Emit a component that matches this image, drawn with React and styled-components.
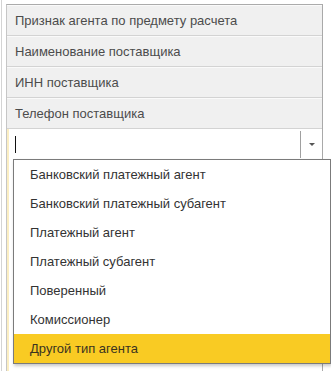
import React from "react";
import styled, { createGlobalStyle } from "styled-components";

const Global = createGlobalStyle`
  html, body { margin: 0; padding: 0; background: #ffffff; overflow: hidden; }
  body { font-family: Arial, "Liberation Sans", sans-serif; }
`;

const Page = styled.div`
  position: relative;
  width: 331px;
  height: 371px;
  box-sizing: border-box;
  padding: 0 0 0 1px;
`;

const Frame = styled.div`
  height: 100%;
  box-sizing: border-box;
  border-left: 1px solid #d4d4d4;
  padding: 4px 0 0 4px;
`;

const Table = styled.div`
  width: 317px;
  height: 100%;
  box-sizing: border-box;
  border-top: 1px solid #ababab;
  border-left: 1px solid #c6c6c6;
  border-right: 1px solid #a9a9a9;
  display: flex;
  flex-direction: column;
`;

const HeaderCell = styled.div`
  height: 30px;
  box-sizing: border-box;
  border-bottom: 1px solid #d3d3d3;
  border-top: 1px solid #fafafa;
  background: #f0f0f0;
  color: #4c4c4c;
  font-size: 13px;
  display: flex;
  align-items: center;
  padding-left: 8px;
  height: 31px;
`;

const InputRow = styled.div`
  height: 30px;
  box-sizing: border-box;
  background: #ffffff;
  display: flex;
  align-items: stretch;
  border-left: 2px solid #fbeec3;
`;

const InputField = styled.div`
  flex: 1;
  display: flex;
  align-items: center;
  padding-left: 6px;
`;

const Caret = styled.span`
  display: block;
  width: 1px;
  height: 17px;
  background: #111;
`;

const DropButton = styled.div`
  width: 21px;
  margin: 2px 0 1px;
  border-left: 1px solid #a0a0a0;
  display: flex;
  align-items: center;
  justify-content: center;
`;

const Arrow = styled.span`
  width: 0;
  height: 0;
  border-left: 3px solid transparent;
  border-right: 3px solid transparent;
  border-top: 3px solid #555;
  margin-left: 1px;
`;

const Rest = styled.div`
  flex: 1;
  border-left: 2px solid #fbeec3;
`;

const Dropdown = styled.div`
  position: absolute;
  left: 13px;
  top: 159px;
  width: 318px;
  box-sizing: border-box;
  border: 1px solid #7b7b7b;
  background: #ffffff;
  box-shadow: 1px 2px 3px rgba(0, 0, 0, 0.22);
  display: flex;
  flex-direction: column;
`;

const Item = styled.div`
  height: 29px;
  display: flex;
  align-items: center;
  padding-left: 16px;
  font-size: 13px;
  color: ${(p) => (p.$active ? "#3a3320" : "#333333")};
  background: ${(p) => (p.$active ? "#f9cb23" : "#ffffff")};
`;

const headers = [
  "Признак агента по предмету расчета",
  "Наименование поставщика",
  "ИНН поставщика",
  "Телефон поставщика",
];

const items = [
  "Банковский платежный агент",
  "Банковский платежный субагент",
  "Платежный агент",
  "Платежный субагент",
  "Поверенный",
  "Комиссионер",
  "Другой тип агента",
];

export default function App() {
  return (
    <>
      <Global />
      <Page>
        <Frame>
          <Table>
            {headers.map((h) => (
              <HeaderCell key={h}>{h}</HeaderCell>
            ))}
            <InputRow>
              <InputField>
                <Caret />
              </InputField>
              <DropButton>
                <Arrow />
              </DropButton>
            </InputRow>
            <Rest />
          </Table>
        </Frame>
        <Dropdown>
          {items.map((it, i) => (
            <Item key={it} $active={i === items.length - 1}>
              {it}
            </Item>
          ))}
        </Dropdown>
      </Page>
    </>
  );
}
